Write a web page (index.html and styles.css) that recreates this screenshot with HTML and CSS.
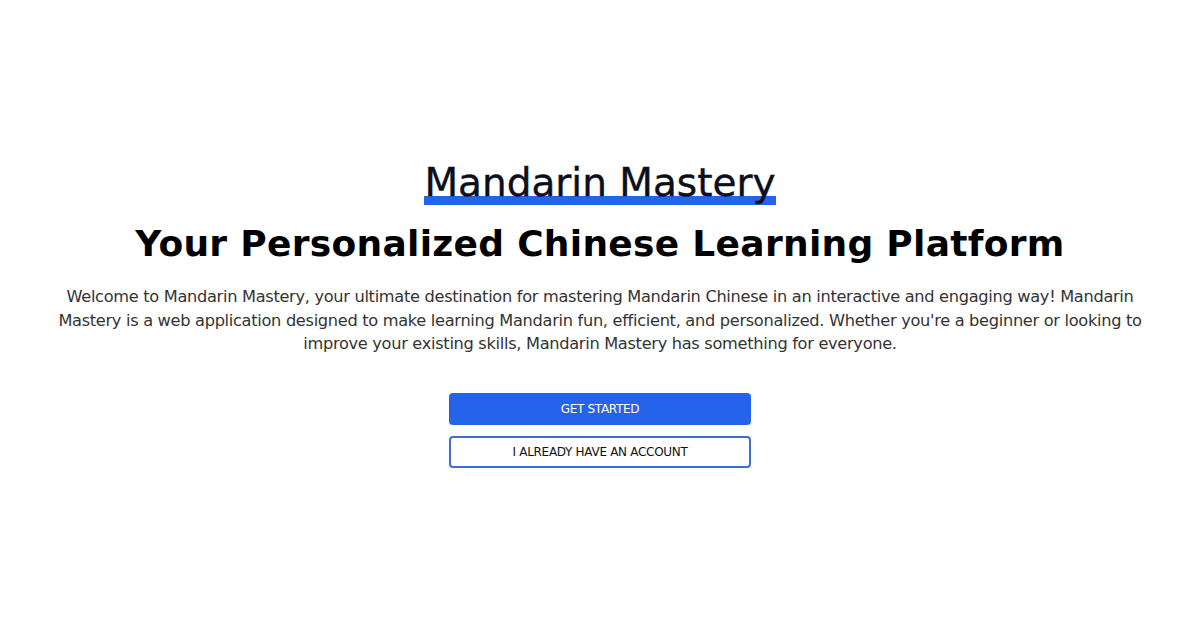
FILE: index.html
```html
<!DOCTYPE html>
<html lang="en">
<head>
<meta charset="utf-8">
<title>Mandarin Mastery</title>
<link rel="stylesheet" href="styles.css">
</head>
<body>
<main class="hero">
  <h1 class="brand"><span class="brand-mark">Mandarin Mastery</span></h1>
  <h2 class="tagline">Your Personalized Chinese Learning Platform</h2>
  <p class="intro">Welcome to Mandarin Mastery, your ultimate destination for mastering Mandarin Chinese in an interactive and engaging way! Mandarin Mastery is a web application designed to make learning Mandarin fun, efficient, and personalized. Whether you're a beginner or looking to improve your existing skills, Mandarin Mastery has something for everyone.</p>
  <div class="actions">
    <a class="btn btn-primary" href="#">GET STARTED</a>
    <a class="btn btn-outline" href="#">I ALREADY HAVE AN ACCOUNT</a>
  </div>
</main>
</body>
</html>
```
FILE: styles.css
```css
* { box-sizing: border-box; }
html, body { margin: 0; padding: 0; background: #fff; }
body {
  width: 1200px;
  height: 630px;
  font-family: "DejaVu Sans", "Noto Sans", sans-serif;
  color: #111;
}
.hero {
  display: flex;
  flex-direction: column;
  align-items: center;
  padding-top: 158px;
}
.brand {
  margin: 0;
  font-size: 39px;
  font-weight: 400;
  line-height: 50px;
  color: #0b0f1c;
  -webkit-text-stroke: 0.4px #0b0f1c;
}
.brand-mark {
  background: linear-gradient(to bottom, transparent 0 36px, #2563eb 36px 47px, transparent 47px);
  letter-spacing: 0;
}
.tagline {
  margin: 12px 0 0;
  font-size: 36px;
  font-weight: 700;
  line-height: 48px;
  color: #000;
  letter-spacing: 0.3px;
}
.intro {
  margin: 17px 0 0;
  width: 1090px;
  text-align: center;
  font-size: 16.2px;
  line-height: 23.5px;
  font-weight: 400;
  color: #333;
  letter-spacing: -0.3px;
}
.actions {
  margin-top: 37px;
  display: flex;
  flex-direction: column;
  gap: 11px;
  width: 302px;
}
.btn {
  display: flex;
  align-items: center;
  justify-content: center;
  height: 32px;
  border-radius: 4px;
  font-size: 12px;
  text-decoration: none;
  letter-spacing: -0.3px;
}
.btn-primary {
  background: #2563eb;
  color: #fff;
}
.btn-outline {
  background: #fff;
  color: #111;
  border: 2px solid #3b6fd8;
}
```
